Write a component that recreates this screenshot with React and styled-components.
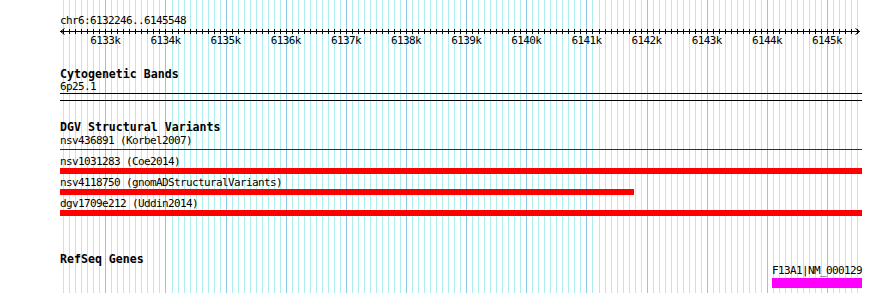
import React from 'react';
import styled, { createGlobalStyle } from 'styled-components';

const START = 6132246;
const END = 6145548;
const LEFT = 60;
const VIEW = 800;
const TRACK_WIDTH = 802;
const SCALE = VIEW / (END - START);

const toX = pos => (pos - START) * SCALE;

const GlobalStyle = createGlobalStyle`
  html, body {
    margin: 0;
    padding: 0;
    background: #ffffff;
  }
  body {
    font-family: "DejaVu Sans Mono", "Liberation Mono", monospace;
    color: #000000;
  }
`;

const Panel = styled.div`
  position: relative;
  width: 890px;
  height: 293px;
  overflow: hidden;
  background: #ffffff;
`;

const GridLayer = styled.svg`
  position: absolute;
  left: 0;
  top: 0;
  width: 890px;
  height: 293px;
  z-index: 0;
`;

const Tracks = styled.div`
  position: relative;
  z-index: 1;
  display: flex;
  flex-direction: column;
  width: ${TRACK_WIDTH}px;
  padding: 15px 0 0 ${LEFT}px;
`;

const Location = styled.div`
  font-size: 11px;
  letter-spacing: -0.62px;
  line-height: 12px;
  height: 12px;
  white-space: pre;
`;

const RulerSvg = styled.svg`
  display: block;
  width: ${TRACK_WIDTH}px;
  height: 21px;
  overflow: visible;
`;

const Track = styled.section`
  display: flex;
  flex-direction: column;
  margin-top: ${p => p.gap}px;
`;

const TrackTitle = styled.div`
  font-size: 11.6px;
  font-weight: bold;
  line-height: 13px;
  height: 13px;
  white-space: pre;
`;

const FeatureRow = styled.div`
  display: flex;
  flex-direction: column;
  margin-bottom: ${p => p.after || 0}px;
`;

const FeatureLabel = styled.div`
  position: relative;
  z-index: 1;
  font-size: 11px;
  letter-spacing: -0.62px;
  line-height: ${p => p.lh}px;
  height: ${p => p.lh}px;
  white-space: pre;
`;

const Band = styled.div`
  height: 6px;
  border-top: 1px solid #000000;
  border-bottom: 1px solid #000000;
`;

const Bar = styled.div`
  height: ${p => p.h}px;
  margin-top: ${p => p.offset || 0}px;
  background: ${p => p.color};
`;

const LineGlyph = styled.div`
  height: 6px;
  padding-top: 2px;
  box-sizing: border-box;

  &::after {
    content: '';
    display: block;
    height: 1px;
    background: #1a1ad2;
  }
`;

const gridLines = [];
for (let p = Math.ceil(START / 100) * 100; p <= END; p += 100) {
  gridLines.push(p);
}

const majorTicks = gridLines.filter(p => p % 1000 === 0);

function Grid() {
  return (
    <GridLayer viewBox="0 0 890 293">
      {gridLines.map(p => {
        const x = Math.round(LEFT + toX(p)) + 0.5;
        return (
          <line
            key={p}
            x1={x}
            x2={x}
            y1={0}
            y2={293}
            stroke={p % 1000 === 0 ? '#8cc8e8' : '#aeeeee'}
            strokeWidth="1"
          />
        );
      })}
    </GridLayer>
  );
}

function Ruler() {
  return (
    <RulerSvg viewBox={`0 0 ${TRACK_WIDTH} 21`}>
      <line x1="0" x2={VIEW} y1="4.5" y2="4.5" stroke="#000" strokeWidth="1" />
      <polyline points="4.5,1.5 0.5,4.5 4.5,7.5" fill="none" stroke="#000" />
      <polyline
        points={`${VIEW - 4.5},1.5 ${VIEW - 0.5},4.5 ${VIEW - 4.5},7.5`}
        fill="none"
        stroke="#000"
      />
      {gridLines.map(p => {
        const x = Math.round(toX(p)) + 0.5;
        return <line key={p} x1={x} x2={x} y1="2" y2="7" stroke="#000" />;
      })}
      {majorTicks.map(p => (
        <text
          key={p}
          x={toX(p)}
          y="16.8"
          textAnchor="middle"
          fontSize="11"
          letterSpacing="-0.62"
          fontFamily='"DejaVu Sans Mono", "Liberation Mono", monospace'
          fill="#000"
        >
          {`${p / 1000}k`}
        </text>
      ))}
    </RulerSvg>
  );
}

const variants = [
  { name: 'nsv436891', source: 'Korbel2007', start: 6100000, end: 6200000, kind: 'line' },
  { name: 'nsv1031283', source: 'Coe2014', start: 6050000, end: 6300000, kind: 'bar' },
  { name: 'nsv4118750', source: 'gnomADStructuralVariants', start: 6120000, end: 6141790, kind: 'bar' },
  { name: 'dgv1709e212', source: 'Uddin2014', start: 6080000, end: 6260000, kind: 'bar' },
];

const genes = [{ name: 'F13A1|NM_000129', start: 6144085, end: 6320682 }];

function span(feature) {
  const left = Math.max(0, toX(feature.start));
  const right = Math.min(TRACK_WIDTH, toX(feature.end));
  return { left: Math.round(left), width: Math.round(right - left) };
}

function Variant({ feature }) {
  const { left, width } = span(feature);
  return (
    <FeatureRow after={2}>
      <FeatureLabel lh={13} style={{ marginLeft: left }}>
        {`${feature.name} (${feature.source})`}
      </FeatureLabel>
      {feature.kind === 'line' ? (
        <LineGlyph style={{ marginLeft: left, width }} />
      ) : (
        <Bar h={6} color="#ff0000" style={{ marginLeft: left, width }} />
      )}
    </FeatureRow>
  );
}

function Gene({ feature }) {
  const { left, width } = span(feature);
  return (
    <FeatureRow>
      <FeatureLabel lh={10} style={{ marginLeft: left }}>
        {feature.name}
      </FeatureLabel>
      <Bar h={10} offset={2} color="#ff00ff" style={{ marginLeft: left, width }} />
    </FeatureRow>
  );
}

export default function App() {
  return (
    <>
      <GlobalStyle />
      <Panel>
        <Grid />
        <Tracks>
          <Location>{`chr6:${START}..${END}`}</Location>
          <Ruler />

          <Track gap={20}>
            <TrackTitle>Cytogenetic Bands</TrackTitle>
            <FeatureRow>
              <FeatureLabel lh={12}>6p25.1</FeatureLabel>
              <Band />
            </FeatureRow>
          </Track>

          <Track gap={20}>
            <TrackTitle>DGV Structural Variants</TrackTitle>
            {variants.map(v => (
              <Variant key={v.name} feature={v} />
            ))}
          </Track>

          <Track gap={35}>
            <TrackTitle>RefSeq Genes</TrackTitle>
            {genes.map(g => (
              <Gene key={g.name} feature={g} />
            ))}
          </Track>
        </Tracks>
      </Panel>
    </>
  );
}
